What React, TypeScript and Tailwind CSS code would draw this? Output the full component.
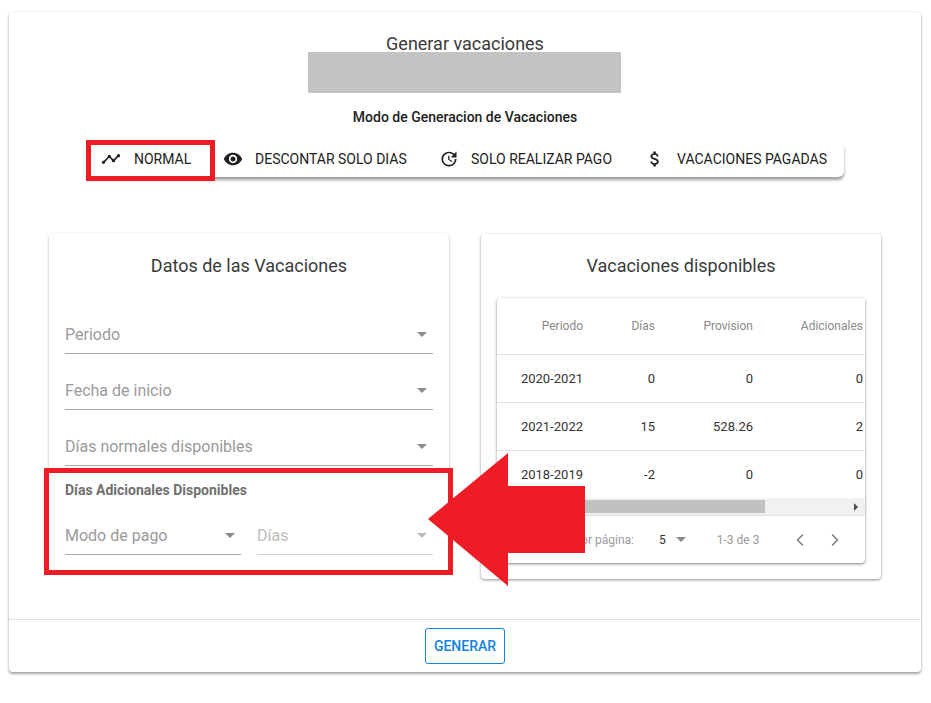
import { ChevronLeft, ChevronRight } from 'lucide-react'

const font = { fontFamily: 'Roboto, sans-serif' }

function Caret({ className = 'border-t-[#8a8a8a]' }: { className?: string }) {
  return <span className={`w-0 h-0 border-x-[5px] border-x-transparent border-t-[5px] ${className}`} />
}

function SelectField({ label, disabled, className = '' }: { label: string; disabled?: boolean; className?: string }) {
  return (
    <div className={`h-[38px] flex items-center justify-between pr-[6px] border-b ${disabled ? 'border-[#d2d2d2]' : 'border-[#ababab]'} ${className}`}>
      <span className={`text-base ${disabled ? 'text-[#bdbdbd]' : 'text-[#9a9a9a]'}`}>{label}</span>
      <Caret className={disabled ? 'border-t-[#bdbdbd]' : 'border-t-[#8a8a8a]'} />
    </div>
  )
}

function ToggleItem({ icon, label, className = '' }: { icon: React.ReactNode; label: string; className?: string }) {
  return (
    <div className={`flex items-center h-9 text-sm text-[#212121] ${className}`}>
      {icon}
      <span>{label}</span>
    </div>
  )
}

function MuiIcon({ d }: { d: string }) {
  return (
    <svg viewBox="0 0 24 24" className="w-5 h-5 fill-[#1f1f1f] shrink-0">
      <path d={d} />
    </svg>
  )
}

const rows = [
  ['2020-2021', '0', '0', '0'],
  ['2021-2022', '15', '528.26', '2'],
  ['2018-2019', '-2', '0', '0'],
]

export default function App() {
  return (
    <div className="relative w-[931px] h-[703px] bg-white overflow-hidden pt-3 pl-[9px]" style={font}>
      <div className="w-[912px] h-[660px] bg-white rounded shadow-[0_2px_3px_rgba(0,0,0,0.35),0_0_2px_rgba(0,0,0,0.12)] flex flex-col items-center">
        <h1 className="mt-[21px] text-lg leading-[22px] text-[#3a3a3a]">Generar vacaciones</h1>
        <div className="-mt-[3px] ml-[-2px] w-[313px] h-[41px] bg-[#c3c3c3]" />
        <p className="mt-4 text-sm leading-[16px] font-medium text-[#212121]">Modo de Generacion de Vacaciones</p>

        {/* Modo */}
        <div className="mt-4 ml-[1px] w-[757px] h-9 flex items-center rounded-md bg-white shadow-[0_3px_3px_rgba(0,0,0,0.38)]">
          <ToggleItem className="w-[127px] gap-[13px] pl-[14px]" icon={<MuiIcon d="M23 8c0 1.1-.9 2-2 2-.18 0-.35-.02-.51-.07l-3.56 3.55c.05.16.07.34.07.52 0 1.1-.9 2-2 2s-2-.9-2-2c0-.18.02-.36.07-.52l-2.55-2.55c-.16.05-.34.07-.52.07s-.36-.02-.52-.07l-4.55 4.56c.05.16.07.33.07.51 0 1.1-.9 2-2 2s-2-.9-2-2 .9-2 2-2c.18 0 .35.02.51.07l4.56-4.55C8.02 9.36 8 9.18 8 9c0-1.1.9-2 2-2s2 .9 2 2c0 .18-.02.36-.07.52l2.55 2.55c.16-.05.34-.07.52-.07s.36.02.52.07l3.55-3.56C19.02 8.35 19 8.18 19 8c0-1.1.9-2 2-2s2 .9 2 2z" />} label="NORMAL" />
          <ToggleItem className="w-[216px] gap-3 pl-[9px]" icon={<MuiIcon d="M12 4.5C7 4.5 2.73 7.61 1 12c1.73 4.39 6 7.5 11 7.5s9.27-3.11 11-7.5c-1.73-4.39-6-7.5-11-7.5zM12 17c-2.76 0-5-2.24-5-5s2.24-5 5-5 5 2.24 5 5-2.24 5-5 5zm0-8c-1.66 0-3 1.34-3 3s1.34 3 3 3 3-1.34 3-3-1.34-3-3-3z" />} label="DESCONTAR SOLO DIAS" />
          <ToggleItem className="w-[206px] gap-3 pl-[9px]" icon={<MuiIcon d="M21 10.12h-6.78l2.74-2.82c-2.73-2.7-7.15-2.8-9.88-.1-2.73 2.71-2.73 7.08 0 9.79s7.15 2.71 9.88 0C18.32 15.65 19 14.08 19 12.1h2c0 1.98-.88 4.55-2.64 6.29-3.51 3.48-9.21 3.48-12.72 0-3.5-3.47-3.53-9.11-.02-12.58s9.14-3.47 12.65 0L21 3v7.12zM12.5 8v4.25l3.5 2.08-.72 1.21L11 13V8h1.5z" />} label="SOLO REALIZAR PAGO" />
          <ToggleItem className="flex-1 gap-3 pl-[9px]" icon={<MuiIcon d="M11.8 10.9c-2.27-.59-3-1.2-3-2.15 0-1.09 1.01-1.85 2.7-1.85 1.78 0 2.44.85 2.5 2.1h2.21c-.07-1.72-1.12-3.3-3.21-3.81V3h-3v2.16c-1.94.42-3.5 1.68-3.5 3.61 0 2.31 1.91 3.46 4.7 4.13 2.5.6 3 1.48 3 2.41 0 .69-.49 1.79-2.7 1.79-2.06 0-2.87-.92-2.98-2.1h-2.2c.12 2.19 1.76 3.42 3.68 3.83V21h3v-2.15c1.95-.37 3.5-1.5 3.5-3.55 0-2.84-2.43-3.81-4.7-4.4z" />} label="VACACIONES PAGADAS" />
        </div>

        <div className="mt-[57px] flex gap-8 items-start">
          {/* Datos */}
          <div className="w-[400px] h-[338px] rounded-sm bg-white shadow-[0_1px_3px_rgba(0,0,0,0.3)] px-4">
            <h2 className="mt-[21px] text-lg leading-[22px] text-center text-[#3a3a3a]">Datos de las Vacaciones</h2>
            <div className="mt-[39px] flex flex-col gap-[18px]">
              <SelectField label="Periodo" />
              <SelectField label="Fecha de inicio" />
              <SelectField label="Días normales disponibles" />
            </div>
            <p className="mt-4 text-sm leading-4 font-bold text-[#6f6f6f]">Días Adicionales Disponibles</p>
            <div className="mt-[19px] flex gap-4">
              <SelectField className="flex-1" label="Modo de pago" />
              <SelectField className="flex-1" label="Días" disabled />
            </div>
          </div>

          {/* Disponibles */}
          <div className="w-[400px] h-[345px] rounded-sm bg-white shadow-[0_1px_3px_rgba(0,0,0,0.45)] px-4">
            <h2 className="mt-[21px] text-lg leading-[22px] text-center text-[#3a3a3a]">Vacaciones disponibles</h2>
            <div className="mt-[21px] w-[368px] h-[265px] rounded bg-white shadow-[0_1px_3px_rgba(0,0,0,0.5)] flex flex-col">
              <div className="h-[57px] flex items-center border-b border-[#e0e0e0] text-xs text-[#8a8a8a]">
                <span className="w-[86px] text-right">Periodo</span>
                <span className="w-[72px] text-right">Días</span>
                <span className="w-[98px] text-right">Provision</span>
                <span className="w-[110px] text-right">Adicionales</span>
              </div>
              {rows.map((row, i) => (
                <div key={row[0]} className={`h-[48px] flex items-center text-[13px] text-[#333] ${i < 2 ? 'border-b border-[#e0e0e0]' : ''}`}>
                  <span className="w-[86px] text-right">{row[0]}</span>
                  <span className="w-[72px] text-right">{row[1]}</span>
                  <span className="w-[98px] text-right">{row[2]}</span>
                  <span className="w-[110px] text-right">{row[3]}</span>
                </div>
              ))}
              <div className="h-[17px] -mt-[1px] bg-[#f1f1f1] flex items-center justify-between pl-[16px] pr-[7px]">
                <div className="w-[252px] h-[13px] bg-[#c1c1c1]" />
                <span className="w-0 h-0 border-y-[4px] border-y-transparent border-l-[4px] border-l-[#505050]" />
              </div>
              <div className="flex-1 flex items-center border-t border-[#e0e0e0] text-xs text-[#9a9a9a] pl-[15px]">
                <span className="w-[122px] text-right">Filas por página:</span>
                <span className="ml-[25px] text-[#333]">5</span>
                <span className="ml-[10px] flex"><Caret /></span>
                <span className="ml-[31px]">1-3 de 3</span>
                <ChevronLeft className="ml-[31px] w-5 h-5 text-[#808080]" />
                <ChevronRight className="ml-[15px] w-5 h-5 text-[#808080]" />
              </div>
            </div>
          </div>
        </div>

        <div className="mt-10 w-full border-t border-[#e0e0e0] flex justify-center pt-2">
          <button className="w-20 h-9 rounded-[3px] border border-[#1183e0] text-sm font-medium text-[#1183e0]">GENERAR</button>
        </div>
      </div>

      {/* anotaciones */}
      <div className="absolute left-[86px] top-[140px] w-[129px] h-[41px] border-[5px] border-[#ee1c25]" />
      <div className="absolute left-[44px] top-[468px] w-[409px] h-[107px] border-[5px] border-[#ee1c25]" />
      <svg className="absolute left-[428px] top-[453px]" width="158" height="134" viewBox="0 0 158 134">
        <polygon points="0,66 80,0 80,33 157,33 157,100 80,100 80,133" fill="#ee1c25" />
      </svg>
    </div>
  )
}
